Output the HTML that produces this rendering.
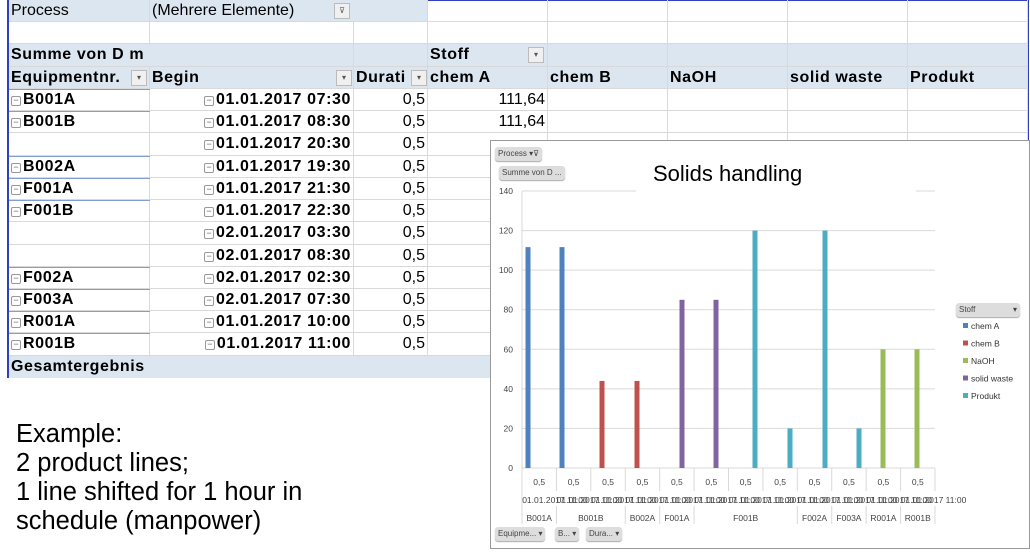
<!DOCTYPE html><html><head><meta charset="utf-8"><style>
*{margin:0;padding:0;box-sizing:border-box}
body{width:1030px;height:557px;background:#fff;position:relative;overflow:hidden;font-family:"Liberation Sans",sans-serif}
.c{position:absolute;font-size:16px;line-height:22px;white-space:nowrap;overflow:hidden;border-right:1px solid #d9d9d9;border-bottom:1px solid #d9d9d9;color:#000;padding:0 2px}
.b{font-weight:bold;letter-spacing:0.6px}
.r{text-align:right}
.hb{background:#dce6f1}
.dd{position:absolute;width:16px;height:16px;background:#f0f0f0;border:1px solid #bbb;font-size:8px;line-height:14px;text-align:center;color:#555}
.m{display:inline-block;width:10px;height:10px;border:1px solid #999;border-radius:2px;font-size:9px;line-height:7px;text-align:center;color:#666;vertical-align:1px;margin-right:2px;font-weight:normal;letter-spacing:0}
.ch{position:absolute;left:490px;top:140px;width:540px;height:409px;border:1px solid #999;background:#fff}
.btn{position:absolute;background:#ddd;border-radius:3px;font-size:8px;color:#444;padding:0 3px;line-height:14px;box-shadow:0 1px 1px #aaa;z-index:2}
.ex{position:absolute;left:16px;font-size:25.5px;color:#000}
</style></head><body>
<div style="position:absolute;left:7px;top:0;width:1022px;height:1px;background:#3040c0"></div>
<div style="position:absolute;left:7px;top:0;width:2px;height:378px;background:#3040c0"></div>
<div style="position:absolute;left:1027px;top:0;width:2px;height:140px;background:#3040c0"></div>
<div id="tb"></div>
<div class="ch">
<svg width="540" height="409" style="position:absolute;left:0;top:0" id="sv"></svg>
<div class="btn" style="left:4px;top:6px">Process ▾⊽</div>
<div class="btn" style="left:8px;top:25px">Summe von D ...</div>
<div style="position:absolute;left:162px;top:20px;font-size:22px;z-index:2">Solids handling</div>
<div class="btn" style="left:4px;top:386px">Equipme... ▾</div>
<div class="btn" style="left:64px;top:386px">B... ▾</div>
<div class="btn" style="left:95px;top:386px">Dura... ▾</div>
<div class="btn" style="left:465px;top:162px;width:64px">Stoff<span style="float:right">▾</span></div>
</div>
<div class="ex" style="top:420px">Example:</div>
<div class="ex" style="top:449px">2 product lines;</div>
<div class="ex" style="top:478px">1 line shifted for 1 hour in</div>
<div class="ex" style="top:507px">schedule (manpower)</div>
<script>
var cols=[9,150,354,428,548,668,788,908,1028];
var tops=[0,22,44,67,89,111,133,156,178,200,222,245,267,289,311,333,356,378];
var h='';
function cell(ci,ri,txt,cls,span){span=span||1;var l=cols[ci],w=cols[ci+span]-l;h+='<div class="c '+(cls||'')+'" style="left:'+l+'px;top:'+tops[ri]+'px;width:'+w+'px;height:'+(tops[ri+1]-tops[ri])+'px">'+txt+'</div>';}
cell(0,0,'Process','hb');cell(1,0,'(Mehrere Elemente)','hb',2);
for(var i=3;i<8;i++)cell(i,0,'');
for(var i=0;i<8;i++)cell(i,1,'');
cell(0,2,'Summe von D m','hb b',2);cell(2,2,'','hb');cell(3,2,'Stoff','hb b');for(var i=4;i<8;i++)cell(i,2,'','hb');
var hd=['Equipmentnr.','Begin','Durati','chem A','chem B','NaOH','solid waste','Produkt'];
for(var i=0;i<8;i++)cell(i,3,hd[i],'hb b');
var d=[['B001A','01.01.2017 07:30','111,64'],['B001B','01.01.2017 08:30','111,64'],['','01.01.2017 20:30',''],['B002A','01.01.2017 19:30',''],['F001A','01.01.2017 21:30',''],['F001B','01.01.2017 22:30',''],['','02.01.2017 03:30',''],['','02.01.2017 08:30',''],['F002A','02.01.2017 02:30',''],['F003A','02.01.2017 07:30',''],['R001A','01.01.2017 10:00',''],['R001B','01.01.2017 11:00','']];
d.forEach(function(r,k){var ri=4+k;cell(0,ri,r[0]?'<span class="m">−</span>'+r[0]:'','b');cell(1,ri,'<span class="m">−</span>'+r[1],'b r');cell(2,ri,'0,5','r');cell(3,ri,r[2],'r');for(var i=4;i<8;i++)cell(i,ri,'');
if(r[0])h+='<div style="position:absolute;left:9px;top:'+tops[ri]+'px;width:141px;height:1px;background:#7f9fd0"></div>';});
h+='<div class="c hb b" style="left:9px;top:356px;width:481px;height:22px;border:none">Gesamtergebnis</div>';
h+='<div class="dd" style="left:334px;top:3px">⊽</div><div class="dd" style="left:528px;top:47px">▾</div><div class="dd" style="left:131px;top:70px">▾</div><div class="dd" style="left:336px;top:70px">▾</div><div class="dd" style="left:411px;top:70px">▾</div>';
document.getElementById('tb').innerHTML=h;
var s='';var x0=31,x1=444,y0=327,k=(327-50)/140;
for(var v=0;v<=140;v+=20){var y=y0-v*k;s+='<line x1="'+x0+'" x2="'+x1+'" y1="'+y+'" y2="'+y+'" stroke="#d9d9d9"/>';s+='<text x="22" y="'+(y+3)+'" font-size="8.5" text-anchor="end" fill="#444" font-family="Liberation Sans">'+v+'</text>';}
s+='<rect x="145" y="40" width="280" height="14" fill="#fff"/>';
s+='<line x1="'+x0+'" x2="'+x0+'" y1="50" y2="327" stroke="#d9d9d9"/>';
var bx=[527,561,601,636,681,715,754,789,824,858,882,916],bv=[111.64,111.64,44,44,85,85,120,20,120,20,60,60],bc=['#4f81bd','#4f81bd','#c0504d','#c0504d','#8064a2','#8064a2','#4bacc6','#4bacc6','#4bacc6','#4bacc6','#9bbb59','#9bbb59'];
var cw=(x1-x0)/12;
for(var i=0;i<12;i++){var x=bx[i]-490;s+='<rect x="'+(x-2.5)+'" y="'+(y0-bv[i]*k)+'" width="5" height="'+(bv[i]*k)+'" fill="'+bc[i]+'"/>';
var cx=x0+cw*(i+.5);s+='<text x="'+cx+'" y="344" font-size="8.5" text-anchor="middle" fill="#444" font-family="Liberation Sans">0,5</text>';
s+='<line x1="'+(x0+cw*(i+1))+'" x2="'+(x0+cw*(i+1))+'" y1="327" y2="350" stroke="#d9d9d9"/>';
s+='<text x="'+(cx-17)+'" y="362" font-size="8.5" fill="#444" font-family="Liberation Sans">01.01.2017 11:00</text>';}
var g=[['B001A',0,1],['B001B',1,3],['B002A',3,4],['F001A',4,5],['F001B',5,8],['F002A',8,9],['F003A',9,10],['R001A',10,11],['R001B',11,12]];
g.forEach(function(q){var a=x0+cw*q[1],b=x0+cw*q[2];s+='<line x1="'+b+'" x2="'+b+'" y1="365" y2="383" stroke="#d9d9d9"/><text x="'+((a+b)/2)+'" y="380" font-size="8.5" text-anchor="middle" fill="#444" font-family="Liberation Sans">'+q[0]+'</text>';});
s+='<line x1="'+x0+'" x2="'+x0+'" y1="327" y2="383" stroke="#d9d9d9"/>';
var lg=[['chem A','#4f81bd'],['chem B','#c0504d'],['NaOH','#9bbb59'],['solid waste','#8064a2'],['Produkt','#4bacc6']];
lg.forEach(function(q,i){var y=188+i*17.5;s+='<rect x="472" y="'+(y-6)+'" width="5" height="5" fill="'+q[1]+'"/><text x="480" y="'+y+'" font-size="8.5" fill="#333" font-family="Liberation Sans">'+q[0]+'</text>';});
document.getElementById('sv').innerHTML=s;
</script></body></html>
